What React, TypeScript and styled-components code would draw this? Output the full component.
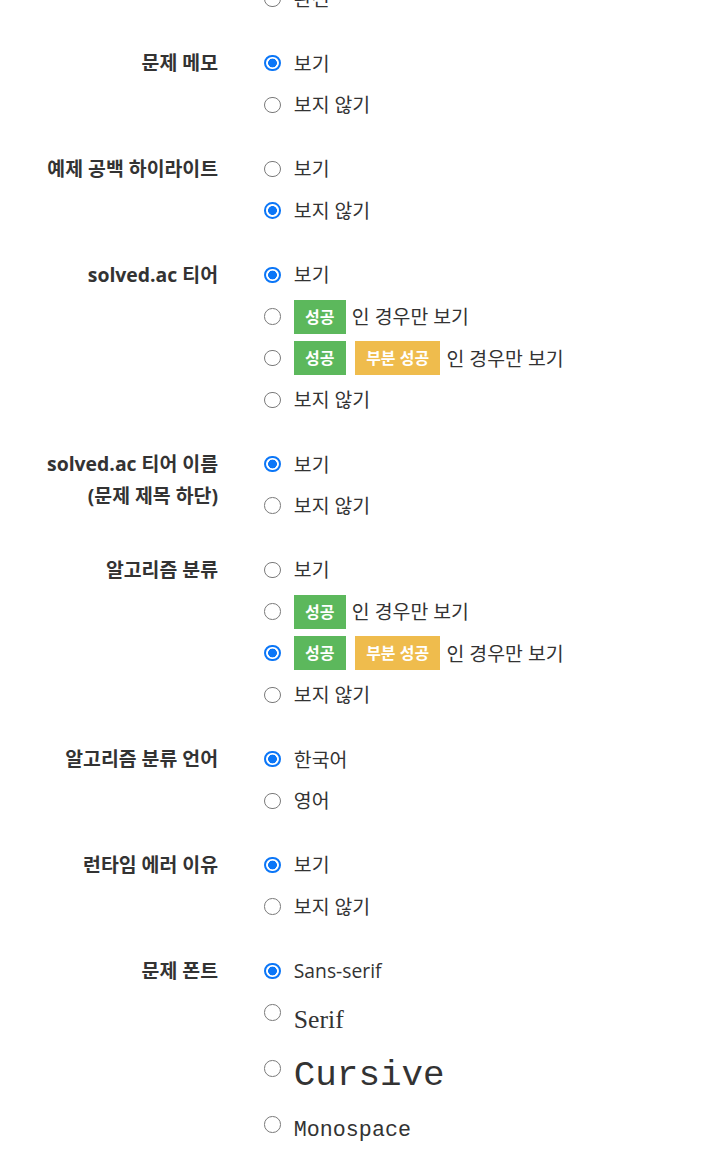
import React from "react";
import styled, { createGlobalStyle, css } from "styled-components";

const GlobalStyle = createGlobalStyle`
  html, body {
    margin: 0;
    padding: 0;
    background: #ffffff;
  }
  body {
    color: #333333;
    font-family: "Open Sans", "Noto Sans CJK KR", sans-serif;
    font-size: 19.4px;
  }
`;

const Page = styled.div`
  margin-top: -63.6px;
`;

const Form = styled.div`
  display: flex;
  flex-direction: column;
  gap: 22.57px;
`;

const Group = styled.div`
  display: grid;
  grid-template-columns: 218px 1fr;
  column-gap: 46.3px;
`;

const GroupLabel = styled.div`
  text-align: right;
  font-weight: 700;
  line-height: 31.5px;
  padding-top: 5.08px;
  color: #333333;
`;

const Options = styled.div`
  display: flex;
  flex-direction: column;
`;

const Option = styled.label`
  display: flex;
  align-items: flex-start;
  gap: 13px;
  padding: 8.33px 0;
  cursor: pointer;
`;

const Radio = styled.input`
  appearance: none;
  -webkit-appearance: none;
  box-sizing: border-box;
  width: 16.5px;
  height: 16.5px;
  margin: 4.25px 0 0;
  flex: none;
  border-radius: 50%;
  border: 1.4px solid #7a7a7a;
  background: #ffffff;

  &:checked {
    border: 2px solid #0b76f7;
    background: radial-gradient(circle, #0b76f7 0 4.1px, #ffffff 4.7px);
  }
`;

type FontKind = "base" | "sans" | "serif" | "cursive" | "mono";

const fontStyles: Record<FontKind, ReturnType<typeof css>> = {
  base: css`
    font-size: 19.4px;
    height: 25px;
    line-height: 25px;
  `,
  sans: css`
    font-family: "Open Sans", sans-serif;
    font-size: 19.3px;
    height: 25px;
    line-height: 25px;
  `,
  serif: css`
    font-family: "Liberation Serif", serif;
    font-size: 25.7px;
    height: 39.33px;
    line-height: 39.33px;
  `,
  cursive: css`
    font-family: "Liberation Mono", monospace;
    font-size: 35.9px;
    height: 39.33px;
    line-height: 39.33px;
  `,
  mono: css`
    font-family: "Liberation Mono", monospace;
    font-size: 21.7px;
    height: 37.5px;
    line-height: 37.5px;
  `,
};

const OptionText = styled.span<{ $font: FontKind }>`
  display: flex;
  align-items: center;
  gap: 5px;
  white-space: nowrap;
  color: #333333;
  ${(p) => fontStyles[p.$font]}
`;

const Badge = styled.span<{ $tone: "success" | "warning" }>`
  display: inline-flex;
  align-items: center;
  flex: none;
  height: 34px;
  padding: 0 11.3px;
  font-size: 16px;
  font-weight: 700;
  line-height: 1;
  color: #ffffff;
  background: ${(p) => (p.$tone === "success" ? "#5cb85c" : "#efbc4d")};
  margin-left: ${(p) => (p.$tone === "warning" ? "4px" : "0")};
`;

const Tail = styled.span`
  margin-left: 1px;
`;

type OptionDef = {
  text: React.ReactNode;
  checked?: boolean;
  font?: FontKind;
};

type GroupDef = {
  name: string;
  label: React.ReactNode;
  options: OptionDef[];
};

const successOnly = (
  <>
    <Badge $tone="success">성공</Badge>
    <Tail>인 경우만 보기</Tail>
  </>
);

const successPartial = (
  <>
    <Badge $tone="success">성공</Badge>
    <Badge $tone="warning">부분 성공</Badge>
    <Tail>인 경우만 보기</Tail>
  </>
);

const groups: GroupDef[] = [
  {
    name: "lang",
    label: "언어 표시",
    options: [{ text: "간략" }, { text: "완전" }],
  },
  {
    name: "memo",
    label: "문제 메모",
    options: [{ text: "보기", checked: true }, { text: "보지 않기" }],
  },
  {
    name: "space",
    label: "예제 공백 하이라이트",
    options: [{ text: "보기" }, { text: "보지 않기", checked: true }],
  },
  {
    name: "tier",
    label: "solved.ac 티어",
    options: [
      { text: "보기", checked: true },
      { text: successOnly },
      { text: successPartial },
      { text: "보지 않기" },
    ],
  },
  {
    name: "tiername",
    label: (
      <>
        solved.ac 티어 이름
        <br />
        (문제 제목 하단)
      </>
    ),
    options: [{ text: "보기", checked: true }, { text: "보지 않기" }],
  },
  {
    name: "algo",
    label: "알고리즘 분류",
    options: [
      { text: "보기" },
      { text: successOnly },
      { text: successPartial, checked: true },
      { text: "보지 않기" },
    ],
  },
  {
    name: "algolang",
    label: "알고리즘 분류 언어",
    options: [{ text: "한국어", checked: true }, { text: "영어" }],
  },
  {
    name: "rte",
    label: "런타임 에러 이유",
    options: [{ text: "보기", checked: true }, { text: "보지 않기" }],
  },
  {
    name: "font",
    label: "문제 폰트",
    options: [
      { text: "Sans-serif", checked: true, font: "sans" },
      { text: "Serif", font: "serif" },
      { text: "Cursive", font: "cursive" },
      { text: "Monospace", font: "mono" },
    ],
  },
];

export default function App() {
  return (
    <>
      <GlobalStyle />
      <Page>
        <Form>
          {groups.map((g) => (
            <Group key={g.name}>
              <GroupLabel>{g.label}</GroupLabel>
              <Options>
                {g.options.map((o, i) => (
                  <Option key={i}>
                    <Radio type="radio" name={g.name} defaultChecked={!!o.checked} />
                    <OptionText $font={o.font ?? "base"}>{o.text}</OptionText>
                  </Option>
                ))}
              </Options>
            </Group>
          ))}
        </Form>
      </Page>
    </>
  );
}
